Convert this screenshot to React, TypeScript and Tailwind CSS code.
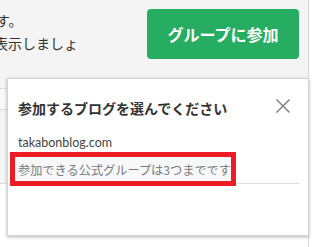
const jp = "font-['Meiryo','Noto_Sans_CJK_JP',sans-serif]";

function CloseIcon() {
    return (
        <svg width="14" height="14" viewBox="0 0 14 14" className="mt-[1px] mr-[9px] shrink-0">
            <path d="M0.5 0.5 L13.5 13.5 M13.5 0.5 L0.5 13.5" stroke="#7a7a7a" strokeWidth="1.4" fill="none" />
        </svg>
    );
}

function JoinModal() {
    return (
        <div className="absolute left-[7px] top-[78px] w-[302px] h-[158px] bg-white border border-[#d4d4d4] shadow-[0_1px_3px_rgba(0,0,0,0.3)]">
            <div className="pl-[10px] pr-[9px]">
                <div className="flex justify-between items-start pt-[19px]">
                    <p className={`${jp} text-[14px] leading-[20px] font-bold text-[#333]`}>
                        参加するブログを選んでください
                    </p>
                    <CloseIcon />
                </div>
                <p className="mt-[17px] font-['Lato','Noto_Sans_CJK_JP',sans-serif] text-[12.5px] leading-[16px] text-[#444]">
                    takabonblog.com
                </p>
                <div className="mt-[6px] h-[27px] border-b border-[#dddddd] flex items-stretch">
                    <span className={`${jp} -ml-[3px] w-[213px] px-[3px] bg-[#f6f8fa] text-[12.2px] leading-[26px] text-[#7a7a7a] whitespace-nowrap`}>
                        参加できる公式グループは3つまでです
                    </span>
                </div>
            </div>
            <div className="absolute left-[2px] top-[73px] w-[226px] h-[34px] border-[5px] border-[#ed1c24]"></div>
        </div>
    );
}

export default function App() {
    return (
        <div className="relative w-[316px] h-[247px] bg-white overflow-hidden">
            <div className="w-[309px] h-[247px] border-r border-[#d8d8d8] flex flex-col">
                <div className="h-[68px] bg-[#f4f4f4] flex justify-between pt-[9px] pr-[9px]">
                    <div className={`${jp} text-[14px] leading-[23px] text-[#333] whitespace-nowrap`}>
                        <p className="-ml-[4px]">す。</p>
                        <p className="-ml-[6px]">表示しましょ</p>
                    </div>
                    <button className={`${jp} w-[152px] h-[50px] rounded-[4px] bg-[#26ad62] text-white font-bold text-[16px]`}>
                        グループに参加
                    </button>
                </div>
                <div className="h-[21px] bg-[#f4f4f4] border-b border-[#dcdcdc]"></div>
                <div className="h-[21px] bg-[#f8f8f8] border-b border-[#dcdcdc]"></div>
                <div className="h-[74px] bg-[#f4f4f4] border-b border-[#dcdcdc]"></div>
                <div className="flex-1 bg-white"></div>
            </div>
            <JoinModal />
        </div>
    );
}
